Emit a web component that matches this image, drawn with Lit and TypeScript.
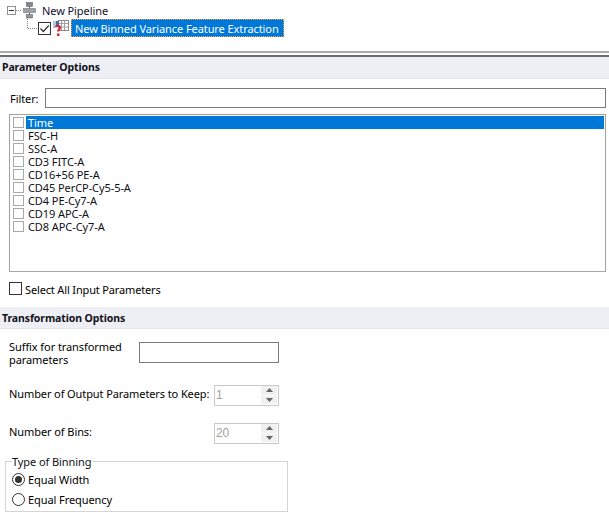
import { LitElement, html, css, svg } from "lit";
import { customElement } from "lit/decorators.js";

const PARAMS = ["Time","FSC-H","SSC-A","CD3 FITC-A","CD16+56 PE-A","CD45 PerCP-Cy5-5-A","CD4 PE-Cy7-A","CD19 APC-A","CD8 APC-Cy7-A"];

@customElement("app-root")
export class AppRoot extends LitElement {
  static styles = css`
    :host { display: block; width: 609px; height: 517px; overflow: hidden; background: #fff; color: #000;
      font-family: "Noto Sans", "Open Sans", sans-serif; font-size: 11px; line-height: 13px; letter-spacing: -0.08px; }
    * { box-sizing: border-box; }
    .tree { height: 51px; padding: 1px 0 0 7px; }
    .t1 { display: flex; align-items: center; height: 18px; }
    .expander { width: 9px; height: 9px; border: 1px solid #919191; position: relative; flex: none; }
    .expander::after { content: ""; position: absolute; left: 1px; right: 1px; top: 3px; height: 1px; background: #333; }
    .t1 svg { flex: none; }
    .t1 .name { margin-left: 6px; color: #101030; }
    .t2 { display: flex; align-items: center; height: 18px; padding-left: 20px; }
    .conn { flex: none; display: block; }
    .tick { width: 13px; height: 13px; flex: none; display: block; }
    .t2 .filt { flex: none; margin-left: 2px; }
    .sel { margin-left: 2px; background: #0078d7; color: #fff; height: 18px; width: 213px; padding: 0 0 0 3px;
      border: 1px dotted #f0a040; display: flex; align-items: center; white-space: nowrap; flex: none; }
    .split { height: 6px; border-top: 2px solid #a8a8a8; border-bottom: 2px solid #6d6d6d; }
    .head { height: 22px; background: #eeeff4; border-bottom: 1px solid #e3e3e8; font-weight: 700; font-size: 10.5px; letter-spacing: -0.1px; padding-left: 2px;
      display: flex; align-items: center; color: #101018; }
    .filter { display: flex; align-items: center; margin: 9px 3px 0 10px; height: 20px; }
    .filter label { width: 35px; }
    .inp { border: 1px solid #7a7a7a; background: #fff; height: 20px; }
    .filter .inp { flex: 1; }
    .list { margin: 6px 3px 0 9px; height: 158px; border: 1px solid #a0a0a0; border-bottom-color: #a8a8a8; padding: 1px 1px 0 3px; }
    .row { display: flex; align-items: center; height: 13px; }
    .box { width: 11px; height: 11px; border: 1px solid #a9a9a9; flex: none; background: #fff; }
    .row .txt { margin-left: 2px; padding-left: 2px; flex: 1; height: 13px; line-height: 13px; color: #101018; }
    .row.on .txt { background: #0078d7; color: #fff; }
    .all { display: flex; align-items: center; margin: 9px 0 0 9px; height: 14px; }
    .all .b { width: 13px; height: 13px; border: 1px solid #333; background: #fff; flex: none; }
    .all span { margin-left: 3px; margin-top: 2px; letter-spacing: -0.15px; }
    .head.h2 { margin-top: 12px; }
    .head.h2 span { margin-top: 1px; }
    .suffix { display: flex; margin: 13px 0 0 9px; }
    .suffix .lbl { width: 130px; line-height: 13px; margin-top: -2px; }
    .suffix .inp { width: 140px; height: 21px; }
    .spinrow { display: flex; align-items: center; margin-left: 9px; height: 22px; white-space: nowrap; }
    .spinrow.a { margin-top: 18px; }
    .spinrow.a .lbl { margin-top: -3px; letter-spacing: -0.1px; }
    .spinrow.b { margin-top: 16px; }
    .spinrow.b .lbl { margin-top: -4px; }
    .spinrow .lbl { width: 205px; }
    .spin { width: 65px; height: 21px; border: 1px solid #c8c8c8; display: flex; color: #a0a0a0; font-family: "Liberation Sans", sans-serif; font-size: 12px; padding-left: 1px; background: #fff; align-items: center; }
    .spin i { flex: 1; font-style: normal; }
    .btns { width: 16px; height: 18px; display: flex; flex-direction: column; gap: 1px; flex: none; margin-right: 1px; }
    .btn { height: 8.500px; background: #f0f0f0; display: flex; align-items: center; justify-content: center; }
    .fs { position: relative; margin: 17px 0 0 5px; width: 283px; height: 51px; border: 1px solid #d4d4d4; padding: 11px 0 0 6px; }
    .legend { position: absolute; left: 6px; top: -7px; background: #fff; padding: 0 1px 0 0; height: 13px; color: #101018; }
    .radio { display: flex; align-items: center; height: 13px; margin-bottom: 7px; }
    .r { width: 13px; height: 13px; border-radius: 50%; border: 1px solid #333; flex: none; display: flex; align-items: center; justify-content: center; background: #fff; }
    .r b { width: 7px; height: 7px; border-radius: 50%; background: #333; display: block; }
    .radio span { margin-left: 3px; margin-top: -1px; }
  `;

  private pipelineIcon() {
    return svg`<svg width="20" height="18" viewBox="0 0 20 18">
      <path d="M0 9.500h6" stroke="#888" stroke-dasharray="1 1" fill="none"/>
      <rect x="7.500" y="7.500" width="12" height="4" fill="#9aa0a8" stroke="#777" stroke-width=".6"/>
      <rect x="10.500" y="1.500" width="6" height="4" fill="#7f868e" stroke="#666" stroke-width=".6"/>
      <rect x="10.500" y="13.500" width="6" height="3.500" fill="#8d939a" stroke="#666" stroke-width=".6"/>
      <path d="M13.500 5.500v2M13.500 11.500v2" stroke="#666"/></svg>`;
  }
  private connector() {
    return svg`<svg class="conn" width="11" height="18" viewBox="0 0 11 18">
      <path d="M.5 0v9.500H11" stroke="#888" stroke-dasharray="1 1" fill="none"/></svg>`;
  }
  private tick() {
    return svg`<svg class="tick" viewBox="0 0 13 13"><rect x=".5" y=".5" width="12" height="12" fill="#fff" stroke="#333"/>
      <path d="M2.500 6.500l2.800 3 5.500-6" fill="none" stroke="#333" stroke-width="1.200"/></svg>`;
  }
  private filterIcon() {
    return svg`<svg class="filt" width="16" height="17" viewBox="0 0 16 17">
      <rect x="5.500" y=".5" width="10" height="10" fill="#fff" stroke="#888"/>
      <path d="M8.500 1v9M11.500 1v9M6 3.500h9M6 7h9" stroke="#a0a0a0"/>
      <rect x="3" y="1" width="3" height="6" fill="#3a6fb5"/>
      <rect x="0" y="1" width="3" height="7" fill="#b9c4d4"/>
      <path d="M2.500 7c1.500-2 5-1.500 4.500 1-.3 1.500-2 1.500-2 3.500" fill="none" stroke="#d9262e" stroke-width="2"/>
      <rect x="4" y="13.500" width="2.500" height="2.500" fill="#d9262e"/></svg>`;
  }
  private arrow(up: boolean) {
    return svg`<svg width="7" height="4" viewBox="0 0 7 4"><path d="${up ? "M0 4L3.500 0 7 4z" : "M0 0h7L3.500 4z"}" fill="#666"/></svg>`;
  }
  private spin(v: string) {
    return html`<div class="spin"><i>${v}</i><div class="btns"><div class="btn">${this.arrow(true)}</div><div class="btn">${this.arrow(false)}</div></div></div>`;
  }

  render() {
    return html`
      <div class="tree">
        <div class="t1"><div class="expander"></div>${this.pipelineIcon()}<span class="name">New Pipeline</span></div>
        <div class="t2">${this.connector()}${this.tick()}${this.filterIcon()}<div class="sel">New Binned Variance Feature Extraction</div></div>
      </div>
      <div class="split"></div>
      <div class="head">Parameter Options</div>
      <div class="filter"><label>Filter:</label><div class="inp"></div></div>
      <div class="list">
        ${PARAMS.map((p, i) => html`<div class="row ${i === 0 ? "on" : ""}"><div class="box"></div><div class="txt">${p}</div></div>`)}
      </div>
      <div class="all"><div class="b"></div><span>Select All Input Parameters</span></div>
      <div class="head h2"><span>Transformation Options</span></div>
      <div class="suffix"><div class="lbl">Suffix for transformed<br />parameters</div><div class="inp"></div></div>
      <div class="spinrow a"><div class="lbl">Number of Output Parameters to Keep:</div>${this.spin("1")}</div>
      <div class="spinrow b"><div class="lbl">Number of Bins:</div>${this.spin("20")}</div>
      <div class="fs">
        <div class="legend">Type of Binning</div>
        <div class="radio"><div class="r"><b></b></div><span>Equal Width</span></div>
        <div class="radio"><div class="r"></div><span>Equal Frequency</span></div>
      </div>
    `;
  }
}
